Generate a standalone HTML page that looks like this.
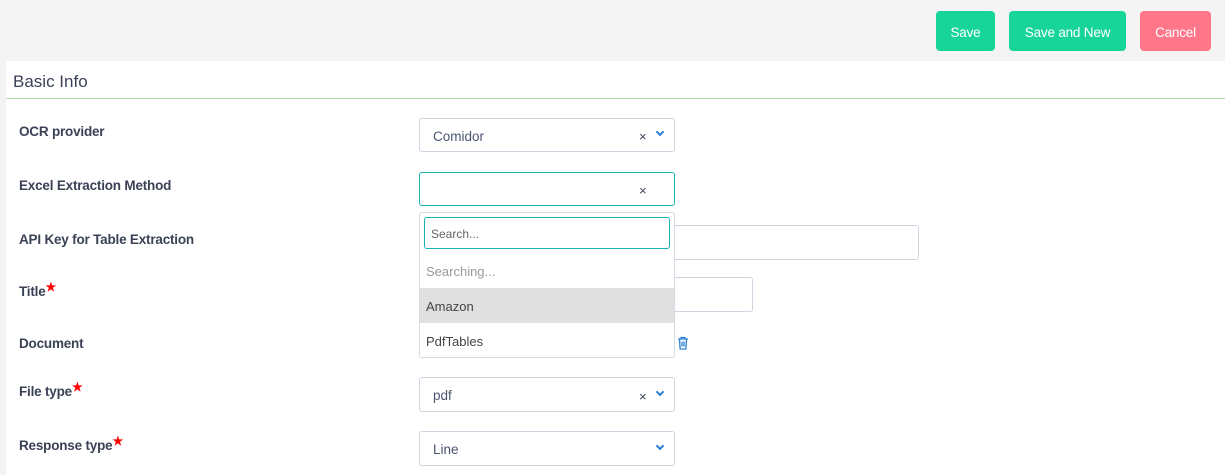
<!DOCTYPE html>
<html><head><style>
*{box-sizing:border-box;margin:0;padding:0}
body{width:1225px;height:475px;background:#f4f4f4;font-family:"Liberation Sans",sans-serif;position:relative;overflow:hidden;color:#3b4256}
.a{position:absolute}
.btn{position:absolute;top:11px;height:40px;border-radius:4px;color:#fff;font-size:13.5px;display:flex;align-items:center;justify-content:center;letter-spacing:-0.2px;padding-top:2px}
.g{background:#17d499}
.panel{position:absolute;left:6px;top:61px;width:1219px;height:414px;background:#fff}
.lbl{position:absolute;left:19px;font-size:13.5px;font-weight:bold;color:#3b4256;letter-spacing:-0.2px}
.lbl b{color:#f00;font-size:12px;vertical-align:top;position:relative;top:-4px}
.in{position:absolute;border:1px solid #cfd5e0;border-radius:3px;background:#fff;font-size:13.5px;color:#4a5570;padding-left:13px;padding-top:2px;display:flex;align-items:center}
.x{position:absolute;font-size:13px;color:#3b4256}
.chev{position:absolute;width:6px;height:6px;border-right:2px solid #2a7fd4;border-bottom:2px solid #2a7fd4;transform:rotate(45deg)}
</style></head><body>
<div class="btn g" style="left:936px;width:59px">Save</div>
<div class="btn g" style="left:1009px;width:117px">Save and New</div>
<div class="btn" style="left:1140px;width:71px;background:#ff7788">Cancel</div>
<div class="panel"></div>
<div class="a" style="left:13px;top:72px;font-size:17px;color:#3b4256">Basic Info</div>
<div class="a" style="left:6px;top:98px;width:1219px;height:1px;background:#b4dcae"></div>

<div class="lbl" style="top:124px">OCR provider</div>
<div class="lbl" style="top:178px">Excel Extraction Method</div>
<div class="lbl" style="top:232px">API Key for Table Extraction</div>
<div class="lbl" style="top:284px">Title<b>★</b></div>
<div class="lbl" style="top:336px">Document</div>
<div class="lbl" style="top:384px">File type<b>★</b></div>
<div class="lbl" style="top:438px">Response type<b>★</b></div>

<div class="in" style="left:419px;top:118px;width:256px;height:34px">Comidor</div>
<div class="x" style="left:639px;top:129px">×</div><div class="chev" style="left:657px;top:129px"></div>

<div class="in" style="left:419px;top:172px;width:256px;height:34px;border-color:#17b3b0"></div>
<div class="x" style="left:639px;top:183px">×</div>

<div class="in" style="left:660px;top:225px;width:259px;height:35px"></div>
<div class="in" style="left:660px;top:277px;width:93px;height:35px"></div>

<div class="a" style="left:419px;top:212px;width:256px;height:146px;border:1px solid #d5dae3;border-radius:3px;background:#fff"></div>
<div class="in" style="left:424px;top:217px;width:246px;height:32px;border-color:#17b3b0;font-size:12px;color:#666;padding-left:6px">Search...</div>
<div class="a" style="left:426px;top:264px;font-size:13px;color:#999">Searching...</div>
<div class="a" style="left:420px;top:288px;width:254px;height:35px;background:#e0e0e0"></div>
<div class="a" style="left:426px;top:299px;font-size:13px;color:#444">Amazon</div>
<div class="a" style="left:426px;top:334px;font-size:13px;color:#444">PdfTables</div>

<svg class="a" style="left:677px;top:336px" width="12" height="14" viewBox="0 0 12 14"><path d="M1 3h10M4 3V1.5h4V3M2.5 3l.6 10h5.8l.6-10M5 5.5v5M7 5.5v5" stroke="#2a7fd4" stroke-width="1.3" fill="none"/></svg>

<div class="in" style="left:419px;top:377px;width:256px;height:35px">pdf</div>
<div class="x" style="left:639px;top:389px">×</div><div class="chev" style="left:657px;top:389px"></div>
<div class="in" style="left:419px;top:431px;width:256px;height:35px">Line</div>
<div class="chev" style="left:657px;top:443px"></div>
</body></html>
